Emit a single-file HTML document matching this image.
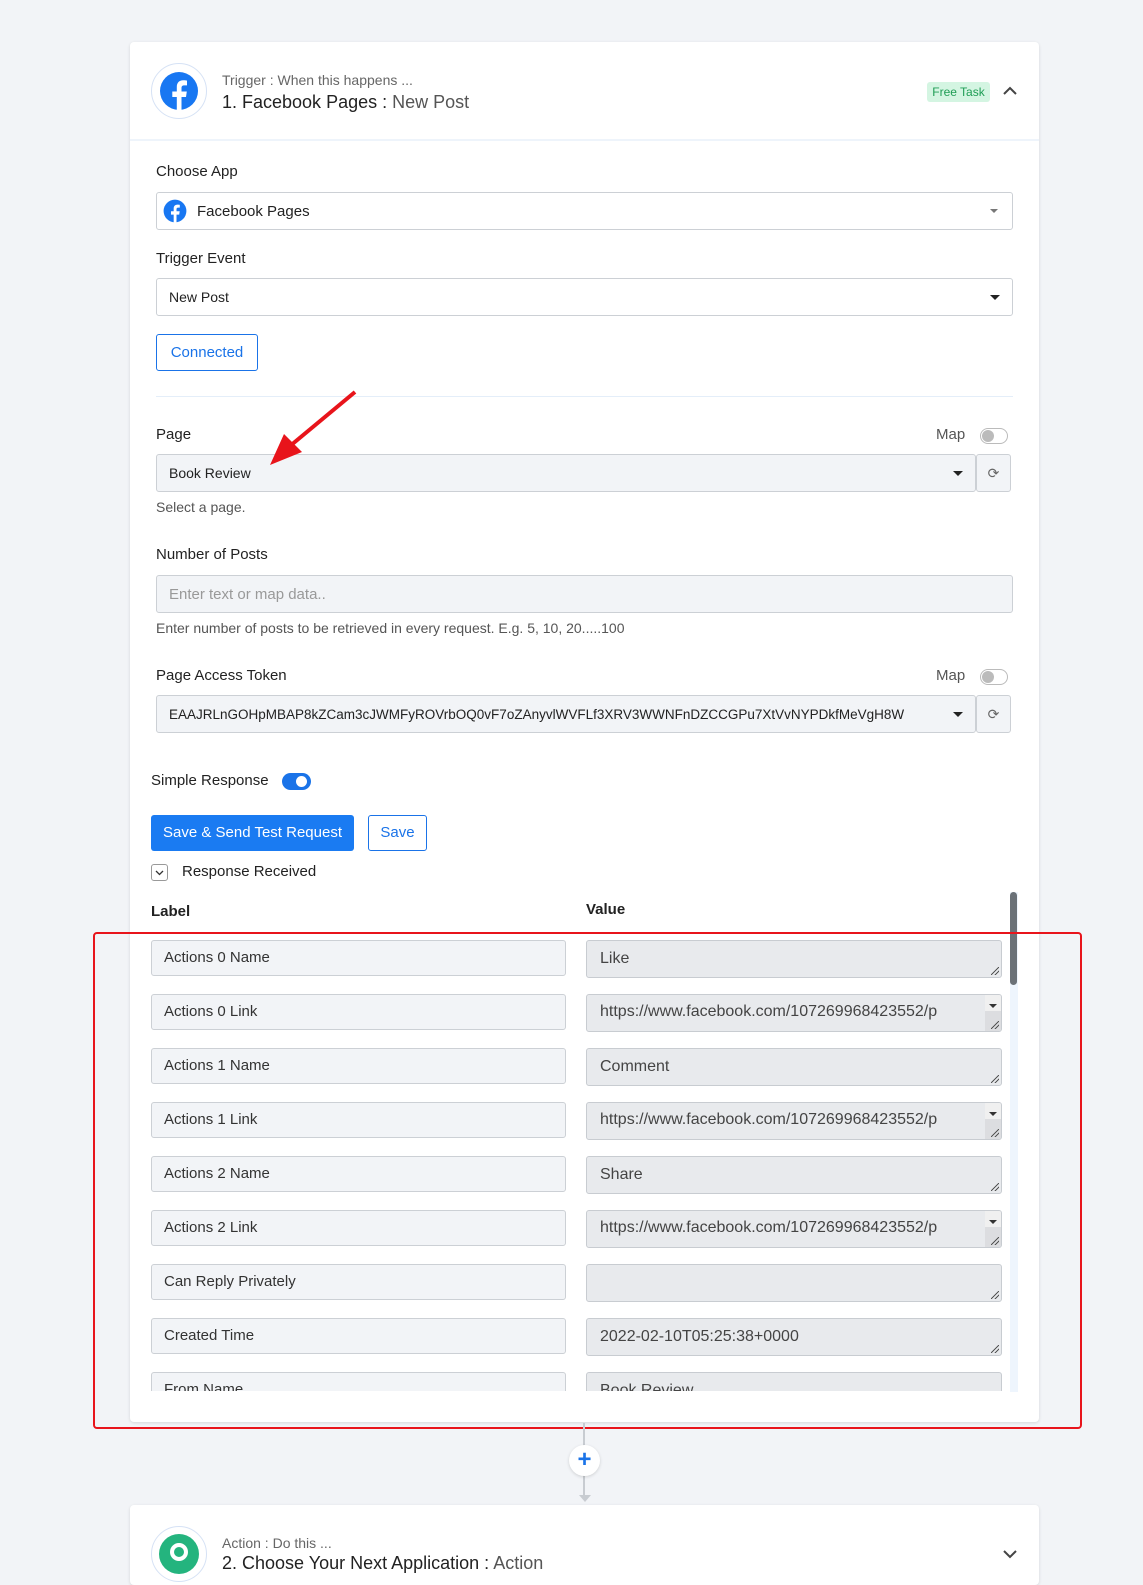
<!DOCTYPE html>
<html><head><meta charset="utf-8"><style>
*{box-sizing:border-box;margin:0;padding:0}
body{width:1143px;height:1563px;background:#f2f4f7;font-family:"Liberation Sans",sans-serif;color:#222;position:relative;overflow:hidden}
.abs{position:absolute}
.card{position:absolute;left:130px;width:909px;background:#fff;border-radius:4px;box-shadow:0 1px 3px rgba(0,0,0,.12)}
.lbl{position:absolute;font-size:15px;color:#222}
.inp{position:absolute;border:1px solid #ccd0d5;border-radius:3px;font-size:14px;color:#222;display:flex;align-items:center;padding-left:12px;white-space:nowrap;overflow:hidden}
.gray{background:#f2f4f7}
.caret{position:absolute;width:0;height:0;border-left:5px solid transparent;border-right:5px solid transparent;border-top:5px solid #222}
.tog{position:absolute;width:28px;height:16px;border:1px solid #bbb;border-radius:8px;background:#fff}
.tog:after{content:"";position:absolute;left:1px;top:1px;width:12px;height:12px;border-radius:50%;background:#bbb}
.rl{position:absolute;left:151px;width:415px;height:36px;border:1px solid #ccd0d5;border-radius:3px;background:#f2f4f7;font-size:15px;color:#333;padding:0 12px;line-height:34px;white-space:nowrap;overflow:hidden}
.rv{position:absolute;left:586px;width:416px;height:38px;border:1px solid #c8ccd1;border-radius:3px;background:#e8eaed;font-size:16px;color:#444;padding:0 13px;line-height:36px;white-space:pre;overflow:hidden}
.rv:after{content:"";position:absolute;right:2px;bottom:2px;width:8px;height:8px;background:linear-gradient(135deg,transparent 45%,#555 45%,#555 55%,transparent 55%,transparent 70%,#555 70%,#555 80%,transparent 80%)}
.sp{position:absolute;right:0;top:0;width:16px;height:36px;background:#dcdde0}
.sp:before{content:"";position:absolute;left:4px;top:3px;border-left:4px solid transparent;border-right:4px solid transparent;border-bottom:4px solid #888}
.sp:after{content:"";position:absolute;left:4px;top:9px;border-left:4px solid transparent;border-right:4px solid transparent;border-top:4px solid #333}
.sp i{position:absolute;left:0;top:0;width:16px;height:16px;background:#f0f0f0}
</style></head><body>

<div class="card" style="top:42px;height:1380px"></div>
<div class="abs" style="left:130px;top:139px;width:909px;height:2px;background:#eef4fb"></div>
<div class="abs" style="left:151px;top:63px;width:56px;height:56px;border-radius:50%;border:1px solid #d6e2f5;background:#fff"></div>
<svg class="abs" style="left:159px;top:71px" width="40" height="40" viewBox="0 0 40 40"><circle cx="20" cy="20" r="19" fill="#1877f2"/><path d="M22.5 40V26h4.5l.8-5.5h-5.3v-3.4c0-1.6.6-2.7 2.8-2.7h2.7V9.6c-.5-.1-2-.3-3.8-.3-4 0-6.4 2.4-6.4 6.7v4.5h-4.5V26h4.5v14z" fill="#fff"/></svg>
<div class="abs" style="left:222px;top:72px;font-size:14px;color:#666">Trigger : When this happens ...</div>
<div class="abs" style="left:222px;top:92px;font-size:18px;color:#222">1. Facebook Pages : <span style="color:#555">New Post</span></div>
<div class="abs" style="left:927px;top:82px;width:63px;height:20px;background:#d4f5e2;border-radius:3px;color:#1f9d55;font-size:12px;text-align:center;line-height:20px">Free Task</div>
<svg class="abs" style="left:1003px;top:86px" width="14" height="10"><path d="M1 8l6-6 6 6" stroke="#444" stroke-width="2" fill="none"/></svg>

<div class="lbl" style="left:156px;top:163px">Choose App</div>
<div class="inp" style="left:156px;top:192px;width:857px;height:38px;padding-left:40px;font-size:15px">Facebook Pages</div>
<svg class="abs" style="left:163px;top:199px" width="24" height="24" viewBox="0 0 40 40"><circle cx="20" cy="20" r="19" fill="#1877f2"/><path d="M22.5 40V26h4.5l.8-5.5h-5.3v-3.4c0-1.6.6-2.7 2.8-2.7h2.7V9.6c-.5-.1-2-.3-3.8-.3-4 0-6.4 2.4-6.4 6.7v4.5h-4.5V26h4.5v14z" fill="#fff"/></svg>
<div class="caret" style="left:990px;top:209px;border-top-color:#777;border-width:4px 4px 0"></div>

<div class="lbl" style="left:156px;top:250px">Trigger Event</div>
<div class="inp" style="left:156px;top:278px;width:857px;height:38px">New Post</div>
<div class="caret" style="left:990px;top:295px"></div>

<div class="abs" style="left:156px;top:334px;width:102px;height:37px;border:1px solid #1a73e8;border-radius:3px;color:#1a73e8;font-size:15px;text-align:center;line-height:35px">Connected</div>
<div class="abs" style="left:156px;top:396px;width:857px;height:1px;background:#e4eef9"></div>

<div class="lbl" style="left:156px;top:426px">Page</div>
<div class="lbl" style="left:936px;top:426px;color:#555">Map</div>
<div class="tog" style="left:980px;top:428px"></div>
<div class="inp gray" style="left:156px;top:454px;width:820px;height:38px">Book Review</div>
<div class="caret" style="left:953px;top:471px"></div>
<div class="inp gray" style="left:976px;top:454px;width:35px;height:38px;padding:0;justify-content:center;color:#666;font-size:14px">⟳</div>
<div class="abs" style="left:156px;top:499px;font-size:14px;color:#555">Select a page.</div>
<svg class="abs" style="left:260px;top:388px" width="100" height="82"><path d="M95 4L30 58" stroke="#e8141b" stroke-width="4"/><path d="M10 77L24 46L42 64Z" fill="#e8141b"/></svg>

<div class="lbl" style="left:156px;top:546px">Number of Posts</div>
<div class="inp gray" style="left:156px;top:575px;width:857px;height:38px;color:#999;font-size:15px">Enter text or map data..</div>
<div class="abs" style="left:156px;top:620px;font-size:14px;color:#555">Enter number of posts to be retrieved in every request. E.g. 5, 10, 20.....100</div>

<div class="lbl" style="left:156px;top:667px">Page Access Token</div>
<div class="lbl" style="left:936px;top:667px;color:#555">Map</div>
<div class="tog" style="left:980px;top:669px"></div>
<div class="inp gray" style="left:156px;top:695px;width:820px;height:38px;padding-right:36px;font-size:13.5px"><span style="overflow:hidden;width:772px;display:block">EAAJRLnGOHpMBAP8kZCam3cJWMFyROVrbOQ0vF7oZAnyvlWVFLf3XRV3WWNFnDZCCGPu7XtVvNYPDkfMeVgH8W</span></div>
<div class="caret" style="left:953px;top:712px"></div>
<div class="inp gray" style="left:976px;top:695px;width:35px;height:38px;padding:0;justify-content:center;color:#666;font-size:14px">⟳</div>

<div class="lbl" style="left:151px;top:772px">Simple Response</div>
<div class="abs" style="left:282px;top:773px;width:29px;height:17px;border-radius:9px;background:#1a73e8"></div>
<div class="abs" style="left:296px;top:776px;width:11px;height:11px;border-radius:50%;background:#fff"></div>

<div class="abs" style="left:151px;top:815px;width:203px;height:36px;background:#1a7bf2;border-radius:3px;color:#fff;font-size:15px;text-align:center;line-height:36px">Save &amp; Send Test Request</div>
<div class="abs" style="left:368px;top:815px;width:59px;height:36px;border:1px solid #1a73e8;border-radius:3px;color:#1a73e8;font-size:15px;text-align:center;line-height:34px">Save</div>
<div class="abs" style="left:151px;top:864px;width:17px;height:17px;border:1px solid #999;border-radius:3px"></div>
<svg class="abs" style="left:155px;top:870px" width="9" height="6"><path d="M1 1l3.5 3.5L8 1" stroke="#333" stroke-width="1.3" fill="none"/></svg>
<div class="lbl" style="left:182px;top:863px">Response Received</div>

<div class="abs" style="left:151px;top:903px;font-size:15px;font-weight:bold">Label</div>
<div class="abs" style="left:586px;top:901px;font-size:15px;font-weight:bold">Value</div>
<div class="abs" style="left:1010px;top:892px;width:8px;height:500px;background:#eef5fd"></div>
<div class="abs" style="left:1010px;top:892px;width:7px;height:93px;background:#6b7177;border-radius:4px"></div>

<div class="abs" style="left:140px;top:930px;width:868px;height:461px;overflow:hidden">
<div style="position:relative;left:-140px;top:-930px">
<div class="rl" style="top:940px">Actions 0 Name</div><div class="rv" style="top:940px">Like</div>
<div class="rl" style="top:994px">Actions 0 Link</div><div class="rv" style="top:994px;line-height:34px">https://www.facebook.com/107269968423552/p
osts/129868829496477<div class="sp"><i></i></div></div>
<div class="rl" style="top:1048px">Actions 1 Name</div><div class="rv" style="top:1048px">Comment</div>
<div class="rl" style="top:1102px">Actions 1 Link</div><div class="rv" style="top:1102px;line-height:34px">https://www.facebook.com/107269968423552/p
osts/129868829496477<div class="sp"><i></i></div></div>
<div class="rl" style="top:1156px">Actions 2 Name</div><div class="rv" style="top:1156px">Share</div>
<div class="rl" style="top:1210px">Actions 2 Link</div><div class="rv" style="top:1210px;line-height:34px">https://www.facebook.com/107269968423552/p
osts/129868829496477<div class="sp"><i></i></div></div>
<div class="rl" style="top:1264px">Can Reply Privately</div><div class="rv" style="top:1264px"></div>
<div class="rl" style="top:1318px">Created Time</div><div class="rv" style="top:1318px">2022-02-10T05:25:38+0000</div>
<div class="rl" style="top:1372px">From Name</div><div class="rv" style="top:1372px">Book Review</div>
</div></div>

<div class="abs" style="left:93px;top:932px;width:989px;height:497px;border:2px solid #e8141b;border-radius:4px"></div>

<div class="abs" style="left:583px;top:1423px;width:2px;height:75px;background:#c8ccd1"></div>
<div class="abs" style="left:579px;top:1495px;width:0;height:0;border-left:6px solid transparent;border-right:6px solid transparent;border-top:7px solid #c8ccd1"></div>
<div class="abs" style="left:569px;top:1445px;width:31px;height:31px;border-radius:50%;background:#fff;box-shadow:0 1px 3px rgba(0,0,0,.15);color:#1a73e8;font-size:24px;font-weight:bold;text-align:center;line-height:30px">+</div>

<div class="card" style="top:1505px;height:80px"></div>
<div class="abs" style="left:151px;top:1526px;width:56px;height:56px;border-radius:50%;border:1px solid #d6e2f5;background:#fff"></div>
<div class="abs" style="left:159px;top:1534px;width:40px;height:40px;border-radius:50%;background:#24b47e"></div>
<div class="abs" style="left:170px;top:1543px;width:18px;height:18px;border-radius:50%;border:4px solid #fff"></div>
<div class="abs" style="left:222px;top:1535px;font-size:14px;color:#666">Action : Do this ...</div>
<div class="abs" style="left:222px;top:1553px;font-size:18px;color:#222">2. Choose Your Next Application : <span style="color:#555">Action</span></div>
<svg class="abs" style="left:1003px;top:1549px" width="14" height="10"><path d="M1 2l6 6 6-6" stroke="#444" stroke-width="2" fill="none"/></svg>
</body></html>
